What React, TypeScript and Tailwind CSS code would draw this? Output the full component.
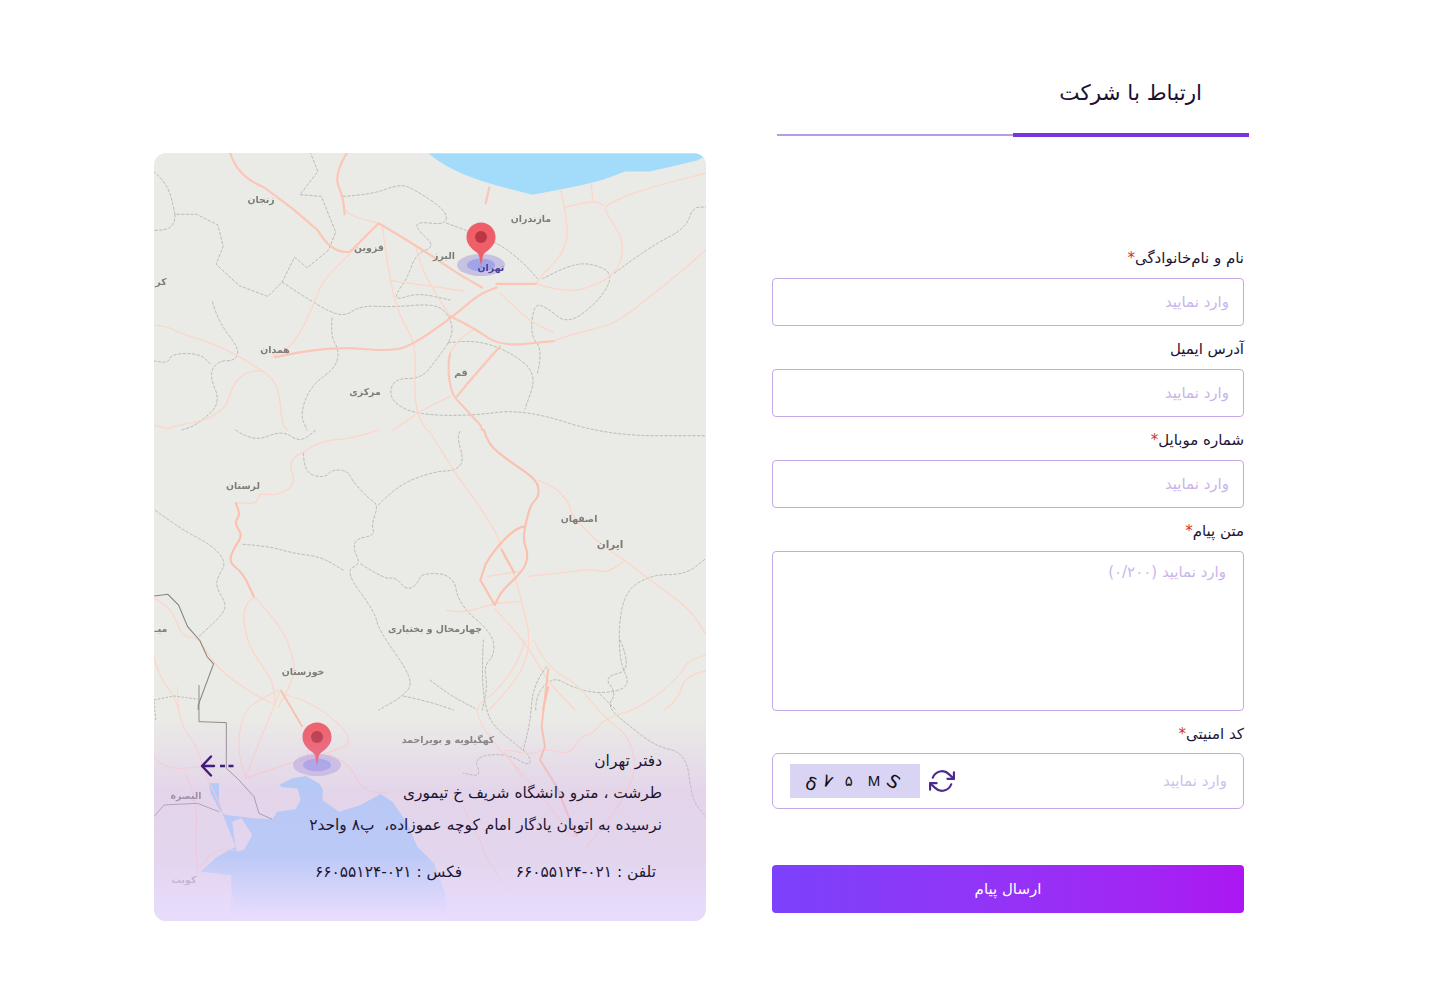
const font = "font-['DejaVu_Sans',sans-serif]";

const thinUp = [
  "M550 10L515 70L540 130L545 180L640 205",
  "M640 205L560 290L480 370L460 430L405 545L340 580",
  "M745 270L755 330L840 465",
  "M650 210L670 360L700 470L745 540L740 680L750 745L775 784",
  "M670 365L780 380L880 395",
  "M1130 535L1180 515L1300 490L1400 410L1500 330L1556 280",
  "M1080 375L1160 400L1250 380L1310 340L1330 260L1280 180L1270 155L1380 110L1556 65",
  "M1080 375L1100 345L1140 310L1170 255L1165 180L1150 110",
  "M1165 160L1240 140L1270 155M1240 140L1235 95",
  "M910 500C860 530 835 560 835 600",
  "M0 490L40 490L90 515L200 550L320 620L360 660L370 770L385 784",
  "M320 620C250 610 230 660 215 710C170 770 100 760 50 780L10 770",
  "M750 735L840 690M980 400L1060 480L1130 510M745 740L680 784",
];
const thickUp = [
  "M225 10C240 50 260 80 320 105L400 165L470 225C490 260 520 290 560 285L640 205",
  "M350 580L500 548L680 565L745 540L850 465L920 405L970 385",
  "M950 105L940 150",
  "M840 465L910 500L980 550L1130 535",
  "M640 205L750 270L860 345L930 385",
  "M980 550L900 640L860 690",
  "M840 570C830 620 840 680 860 700L925 770L930 784",
  "M970 375L1080 375",
  "M550 10L515 70L540 130L545 180",
];
const borderUp = [
  "M10 60C60 100 60 140 70 180L130 180L190 210L205 270L185 320L250 380L330 410L370 370L405 300L440 330L500 280L520 230L480 130L420 125L470 60L450 10",
  "M70 180C70 220 50 225 10 225",
  "M370 370L460 430L540 470L590 435L680 440L800 430L840 465L850 520L800 590L760 640L680 640L670 700L740 740L890 745L1050 725L1280 800L1556 800",
  "M540 130L620 125L700 95L740 110L830 170L830 210L745 200L750 225L800 270L745 290L720 360L690 400L690 420L750 400L840 420",
  "M830 205L960 250L1040 310L1085 360",
  "M835 540L900 530L1000 560L1085 625L1050 725",
  "M1085 625L1100 560L1065 520L1075 430L1110 440L1170 490L1260 420L1300 345L1230 315L1170 325L1100 360",
  "M1300 345L1400 270L1500 220L1520 160L1556 160",
  "M175 425L190 480L250 555L240 590L190 590L165 630L200 710L130 770L90 784",
  "M510 470L505 520L530 560L520 610L450 660L420 740L440 784",
  "M10 590L50 600L60 570L140 570L170 600",
];
const thinMid = [
  "M1085 140L1130 155L1175 205L1180 240L1260 320L1330 365L1400 420L1510 500L1556 570",
  "M780 0L850 115L910 195L975 295L985 345L1020 400L1040 480L1065 575L1050 660L1000 730L950 784",
  "M1060 410L1190 395L1240 390L1280 400L1330 365M1040 395L945 410",
  "M830 505L875 515L960 485L1040 480",
  "M965 500L1050 590L1110 700L1190 784",
  "M425 65L385 80L410 155L350 185L305 175L300 205L265 205L240 205",
  "M425 65L470 30L560 25L640 0",
  "M290 465L370 550L405 650L400 700L360 775",
  "M290 470L255 490L275 610L345 700L350 770",
  "M350 770L300 745L230 700L175 650L135 580L90 580L60 500L10 470",
  "M10 630L20 680L70 750L80 784",
  "M1556 675L1500 685L1480 750L1440 784",
];
const thickMid = [
  "M935 0L945 40L1010 90L1085 140L1090 185L1065 210L1050 270L1045 310L1060 350L1045 395L985 450L965 490",
  "M1050 270C1010 275 960 340 940 375L925 420L965 490",
  "M985 335L1020 400",
  "M1115 720L1100 784",
  "M240 205L255 235L235 260L260 295L235 330L220 370L260 400L290 465",
];
const borderMid = [
  "M240 0L290 35L370 0L420 35L465 0",
  "M430 65L430 120L490 135L510 110L555 115L565 140L610 190L640 210L620 265L630 295L575 305L570 335L590 375L545 395L630 510L640 560L740 700L710 745L640 784",
  "M590 375L660 420L685 410L720 450L750 430L760 400L850 405L865 490L960 570L965 630L935 660L945 720L930 784",
  "M640 210L690 155L800 115L850 115L880 90L860 20L870 0",
  "M15 225L90 280L170 320L215 370L190 410L185 440L215 490L200 520L135 580",
  "M260 320L330 325L400 345L480 355L545 395",
  "M710 745L780 760L850 784",
  "M1080 784L1080 740L1130 690L1180 720L1260 740L1350 720L1310 640L1320 460L1400 405L1500 405L1556 360",
  "M1260 740L1305 784",
];
const thinLow = [
  "M375 360L320 385L265 430L250 540L275 625",
  "M380 360L330 480L275 620",
  "M395 375L480 395L610 515L520 550L420 575L275 625",
  "M460 540L465 600M520 550L590 580L620 660L700 670",
  "M70 350L70 450L130 530L145 590L200 710",
  "M0 565L40 600L140 590",
  "M95 610L130 690L125 800L130 920",
  "M240 840L190 830L130 900M190 910L230 920L240 1050",
];
const thinRight = [
  "M310 0L355 85L440 130L525 235L600 290L620 400L560 510L470 620",
  "M285 0L270 60L195 160L145 190L140 230L190 310L280 400L430 590",
  "M828 45L770 60L750 110L630 205L525 235L490 280L450 290L420 345L350 325L300 345L220 325L235 355L275 410",
  "M100 500L160 620L170 660L300 840",
];
const borderRight = [
  "M160 0L155 100L165 200L190 260L280 330L300 350L300 380L230 340L130 350L155 410L100 400",
  "M0 120L50 160L135 205",
  "M570 0L610 90L520 110L560 160L530 200L600 260L680 320L770 340L785 480L828 530",
  "M350 80L310 130L300 250L280 330",
];

const labels: [string, number, number, number?][] = [
  ["زنجان", 261, 203],
  ["مازندران", 531, 222],
  ["قزوین", 369, 251],
  ["البرز", 444, 259],
  ["کر", 161, 285],
  ["همدان", 275, 353],
  ["قم", 461, 376],
  ["مرکزی", 365, 395],
  ["لرستان", 243, 489],
  ["اصفهان", 579, 522],
  ["ایران", 610, 548, 10.5],
  ["چهارمحال و بختیاری", 435, 632],
  ["خوزستان", 303, 675],
  ["میـ", 161, 632],
  ["کهگیلویه و بویراحمد", 448, 743],
  ["البصرة", 186, 799],
  ["کویت", 184, 883],
];

// rounds the corners of the hand traced polylines
function smooth(d: string) {
  return d
    .split("M")
    .filter(Boolean)
    .map((s) => {
      if (s.includes("C")) return "M" + s;
      const p = s.split("L").map((q) => q.trim().split(/\s+/).map(Number));
      let out = `M${p[0][0]} ${p[0][1]}`;
      for (let i = 1; i < p.length - 1; i++) {
        const mx = (p[i][0] + p[i + 1][0]) / 2;
        const my = (p[i][1] + p[i + 1][1]) / 2;
        out += `Q${p[i][0]} ${p[i][1]} ${mx} ${my}`;
      }
      const last = p[p.length - 1];
      return out + `L${last[0]} ${last[1]}`;
    })
    .join("");
}

function Lines({ d, stroke, width, dash }: { d: string[]; stroke: string; width: number; dash?: string }) {
  return (
    <path
      d={d.map(smooth).join("")}
      fill="none"
      stroke={stroke}
      strokeWidth={width}
      strokeLinejoin="round"
      strokeLinecap="round"
      strokeDasharray={dash}
    />
  );
}

function Pin({ x, y }: { x: number; y: number }) {
  return (
    <g>
      <ellipse cx={x} cy={y + 28} rx="24" ry="11" fill="#7a62d8" fillOpacity="0.3" />
      <ellipse cx={x} cy={y + 28} rx="14" ry="6.5" fill="#5a6cf0" fillOpacity="0.35" />
      <path
        d={`M${x - 14.5} ${y}c0-8 6.500-14.500 14.500-14.500s14.500 6.500 14.500 14.500c0 6-3.500 10-7.500 13.500c-2.500 2-4.500 3-5 5l-2 10l-2-10c-.500-2-2.500-3-5-5c-4-3.500-7.500-7.500-7.500-13.500z`}
        fill="#ee5f69"
      />
      <circle cx={x} cy={y} r="6" fill="#bb3745" />
    </g>
  );
}

function MapArt() {
  return (
    <svg viewBox="154 153 552 768" className="absolute inset-0 h-full w-full blur-[0.6px]">
      <rect x="154" y="153" width="552" height="768" fill="#eaebe6" />
      <g transform="translate(150 150) scale(0.35714)">
        <path d="M780 10C850 70 950 95 1070 125C1150 110 1250 95 1330 60L1400 60L1530 30L1570 10Z" fill="#a3dcfb" />
        <Lines d={borderUp} stroke="#a6a7a1" width={2} dash="7 6" />
        <Lines d={thinUp} stroke="#fdd5c9" width={3.6} />
        <Lines d={thickUp} stroke="#fcc6b6" width={6} />
      </g>
      <g transform="translate(150 430) scale(0.35714)">
        <Lines d={borderMid} stroke="#a6a7a1" width={2} dash="7 6" />
        <Lines d={thinMid} stroke="#fdd5c9" width={3.6} />
        <Lines d={thickMid} stroke="#fcc0ae" width={6} />
        <path d="M12 465L50 460L80 490L105 550L140 590L160 635L178 655L135 770L135 784" fill="none" stroke="#85867f" strokeWidth="3" />
      </g>
      <g transform="translate(154 570) scale(0.33333)">
        <path
          d="M355 748L370 725L425 718L440 690L430 655L385 652L375 645L415 625L455 618L495 640L507 660L505 690L555 725L620 705L680 672L715 695L760 760L790 830L840 880L870 960L885 1053L230 1053L232 915L140 905L190 860L245 830L205 730L195 690L195 640L165 640L170 670L200 725L215 735L300 745Z"
          fill="#a4d6f8"
        />
        <path d="M235 755L262 745L295 795L270 840L248 845L240 800Z" fill="#eaebe6" />
        <Lines d={thinLow} stroke="#fdd5c9" width={3.2} />
        <path d="M380 360L445 470" fill="none" stroke="#fcc0ae" strokeWidth="5.500" />
        <path d="M135 345L135 455L217 458L217 595L250 625L300 680L315 730L355 748" fill="none" stroke="#85867f" strokeWidth="2.800" />
        <path d="M5 450L0 390L60 378L135 388" fill="none" stroke="#aeafaa" strokeWidth="2.500" strokeDasharray="7 5" />
        <path d="M0 740L30 705L130 700L195 725" fill="none" stroke="#9a9a94" strokeWidth="3" />
      </g>
      <g transform="translate(430 640) scale(0.33333)">
        <Lines d={borderRight} stroke="#a6a7a1" width={2.2} dash="7 6" />
        <Lines d={thinRight} stroke="#fdd5c9" width={3.2} />
        <path d="M355 85L345 170L335 260L345 320L330 360L380 440L440 590" fill="none" stroke="#fcc0ae" strokeWidth="5.500" />
      </g>
      <g fontFamily="'DejaVu Sans',sans-serif" fontSize="9.400" fontWeight="700" fill="#7c7d77" textAnchor="middle" direction="rtl">
        {labels.map(([t, x, y, s]) => (
          <text key={t} x={x} y={y} fontSize={s}>
            {t}
          </text>
        ))}
      </g>
      <Pin x={481} y={237} />
      <text x="491" y="271" fontFamily="'DejaVu Sans',sans-serif" fontSize="9.400" fontWeight="700" fill="#4a4296" textAnchor="middle">
        تهران
      </text>
      <Pin x={317} y={737} />
    </svg>
  );
}

function Field({ label, required }: { label: string; required?: boolean }) {
  return (
    <div className="mb-[13px]">
      <label className="mb-[10px] block h-5 text-[15px] leading-5 text-[#1e1533]">
        {label}
        {required && <span className="text-[#d0342c]">*</span>}
      </label>
      <input
        placeholder="وارد نمایید"
        className="block h-12 w-full rounded border border-[#c4a9e8] bg-white px-[14px] text-[15px] outline-none placeholder:text-[#c9b4ec]"
      />
    </div>
  );
}

export default function App() {
  return (
    <div className={`flex min-h-screen items-start bg-white pl-[154px] pt-[76px] ${font}`}>
      <div className="relative mt-[77px] h-[768px] w-[552px] overflow-hidden rounded-xl">
        <MapArt />
        <div
          dir="rtl"
          className="absolute inset-x-0 bottom-0 h-[205px] bg-[linear-gradient(to_bottom,rgba(216,176,240,0)_0%,rgba(216,176,240,0.38)_38%,rgba(216,186,245,0.45)_68%,#e8dcfd_98%)] pr-[44px] pt-[29px] text-[15.400px] leading-8 text-[#1e1533]"
        >
          <p>دفتر تهران</p>
          <p>طرشت ، مترو دانشگاه شریف خ تیموری</p>
          <p>نرسیده به اتوبان یادگار امام کوچه عموزاده،&nbsp; پ۸ واحد۲</p>
          <div className="mr-[6px] mt-[15px] flex">
            <span className="w-[194px]">تلفن : ۰۲۱-۶۶۰۵۵۱۲۴</span>
            <span>فکس : ۰۲۱-۶۶۰۵۵۱۲۴</span>
          </div>
          <svg viewBox="0 0 34 22" className="absolute left-[46px] top-[39px] h-[22px] w-[34px]" fill="none" stroke="#3f1d78" strokeWidth="2.400">
            <path d="M11 1.500L2 11l9 9.500M2 11h12" strokeLinecap="round" strokeLinejoin="round" />
            <path d="M20 11h5M28.500 11h5" />
          </svg>
        </div>
      </div>

      <div dir="rtl" className="ml-[66px] w-[472px]">
        <div className="translate-x-[5px]">
          <h1 className="h-[57px] pr-[47px] text-[21.500px] font-normal leading-[34px] text-[#1a1030]">ارتباط با شرکت</h1>
          <div className="flex h-1 items-center">
            <div className="h-1 w-1/2 bg-[#7835dd]" />
            <div className="h-0.5 w-1/2 bg-[#b899ea]" />
          </div>
        </div>

        <div className="mt-[111px]">
          <Field label="نام و نام‌خانوادگی" required />
          <Field label="آدرس ایمیل" />
          <Field label="شماره موبایل" required />

          <div className="mb-[13px]">
            <label className="mb-[10px] block h-5 text-[15px] leading-5 text-[#1e1533]">
              متن پیام<span className="text-[#d0342c]">*</span>
            </label>
            <textarea
              placeholder="وارد نمایید (۰/۲۰۰)"
              className="block h-40 w-full resize-none rounded border border-[#c4a9e8] bg-white px-[17px] py-[9px] text-[15px] outline-none placeholder:text-[#c9b4ec]"
            />
          </div>

          <label className="mb-[9px] block h-5 text-[15px] leading-5 text-[#1e1533]">
            کد امنیتی<span className="text-[#d0342c]">*</span>
          </label>
          <div className="flex h-14 items-center rounded-md border border-[#c4a9e8] bg-white pl-[17px] pr-4">
            <input
              placeholder="وارد نمایید"
              className="min-w-0 flex-1 bg-transparent text-[15px] outline-none placeholder:text-[#cfc0ee]"
            />
            <svg viewBox="0 0 24 24" className="ml-[9px] h-[26px] w-[26px]" fill="none" stroke="#4c2a8e" strokeWidth="2" strokeLinecap="round" strokeLinejoin="round">
              <polyline points="23 4 23 10 17 10" />
              <polyline points="1 20 1 14 7 14" />
              <path d="M3.510 9a9 9 0 0 1 14.850-3.360L23 10M1 14l4.640 4.360A9 9 0 0 0 20.490 15" />
            </svg>
            <div dir="ltr" className="flex h-[34px] w-[130px] items-center bg-[#d9d4f4] pl-[16px] text-[#111] font-['DejaVu_Sans',sans-serif]">
              <span className="translate-y-[2px] rotate-[20deg] text-[18px]">δ</span>
              <span className="ml-[6px] -translate-y-px rotate-[22deg] text-[18px]">۷</span>
              <span className="ml-[12px] text-[15px]">۵</span>
              <span className="ml-[15px] text-[15px] font-['Liberation_Sans',sans-serif]">M</span>
              <span className="ml-[8px] rotate-[35deg] text-[18px]">S</span>
            </div>
          </div>

          <button className="mt-14 h-12 w-full rounded bg-linear-to-r from-[#7b41fb] to-[#ab16f2] text-[15px] text-white">
            ارسال پیام
          </button>
        </div>
      </div>
    </div>
  );
}
